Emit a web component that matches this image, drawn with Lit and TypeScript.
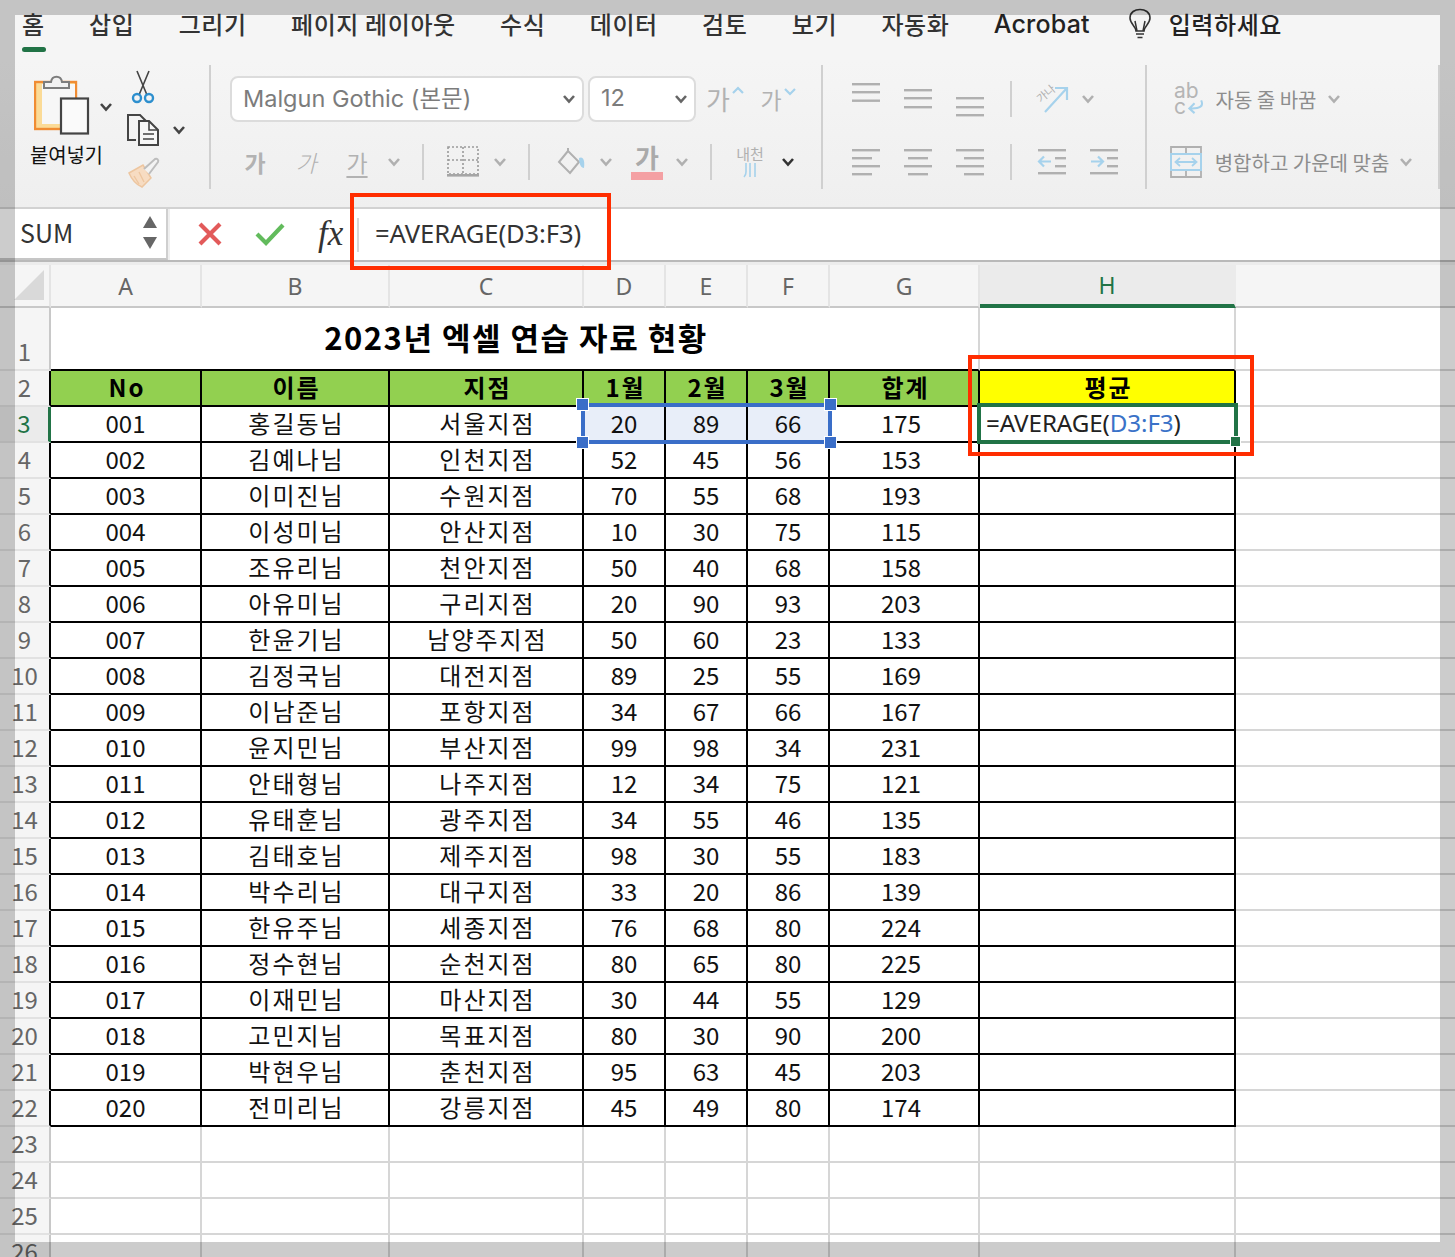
import { LitElement, html, css, svg, TemplateResult } from "lit";
import { customElement } from "lit/decorators.js";

const BLUE = "#a6d2ec";
const GREY = "#b0b0b0";

const chev = (c = "#b0b0b0", w = 2.6) => html`<svg width="14" height="10" viewBox="0 0 14 10"><path d="M2 2 L7 7.5 L12 2" fill="none" stroke=${c} stroke-width=${w} /></svg>`;

type Slot = { x: number; w: number; t: TemplateResult | string };

/** Places ribbon items in a flex row from their measured x positions. */
const place = (start: number, items: Slot[]) => {
  let end = start;
  return items.map((i) => {
    const m = i.x - end;
    end = i.x + i.w;
    return html`<span class="slot" style="margin-left:${m}px;width:${i.w}px">${i.t}</span>`;
  });
};

const alignL = (ys: [number, number, number][]) =>
  html`<svg width="30" height="36" viewBox="0 0 30 36">${ys.map(
    ([x, y, w]) => svg`<rect x=${x} y=${y} width=${w} height="2.4" fill=${GREY} />`
  )}</svg>`;

const clipboard = html`<svg width="56" height="62" viewBox="0 0 56 62">
  <rect x="1" y="8" width="41" height="47" fill="#fbdb97" stroke="#f08c33" stroke-width="2.4" />
  <rect x="8" y="10" width="33" height="40" fill="#f7f7f7" />
  <path d="M10 14 V8 H17 C18 1 27 1 28 8 H35 V14 Z" fill="#f2f2f2" stroke="#7d7d7d" stroke-width="2" />
  <rect x="27" y="24.5" width="27" height="35" fill="#fafafa" stroke="#444" stroke-width="2.2" />
</svg>`;

const scissors = html`<svg width="24" height="34" viewBox="0 0 24 34">
  <path d="M6 1 L16 25 M18 1 L8 25" stroke="#444" stroke-width="1.6" fill="none" />
  <circle cx="6" cy="28" r="4" fill="none" stroke="#2d8fce" stroke-width="2.4" />
  <circle cx="18" cy="28" r="4" fill="none" stroke="#2d8fce" stroke-width="2.4" />
</svg>`;

const copy = html`<svg width="34" height="34" viewBox="0 0 34 34">
  <path d="M10 27 H2 V2 H14 L20 8" fill="none" stroke="#444" stroke-width="2" />
  <path d="M13 8 H23 L32 17 V32 H13 Z" fill="#f7f7f7" stroke="#444" stroke-width="2" />
  <path d="M23 8 V17 H32 M17 21 H28 M17 26 H28" fill="none" stroke="#444" stroke-width="1.6" />
</svg>`;

const painter = html`<svg width="34" height="34" viewBox="0 0 34 34">
  <path d="M2 17 L16 9 L24 22 L15 31 C10 29 5 24 2 17 Z" fill="#f7dcc2" stroke="#edc6a0" stroke-width="1.5" />
  <path d="M17 13 L28 3 C30 2 32 4 31 6 L22 18" fill="#f3f3f3" stroke="#bdbdbd" stroke-width="2" />
  <path d="M7 20 L12 28 M12 16 L17 26" stroke="#edc6a0" stroke-width="1.4" />
</svg>`;

const borderIcon = html`<svg width="32" height="32" viewBox="0 0 32 32">
  <path d="M1 1 H31 V28 H1 Z M16 1 V28 M1 14 H31" fill="none" stroke="#9a9a9a" stroke-width="1.6" stroke-dasharray="2 2" />
  <rect x="0" y="28" width="32" height="2.6" fill="#a5a5a5" />
</svg>`;

const fill = html`<svg width="30" height="28" viewBox="0 0 30 28">
  <path d="M11 3 L2 14 L13 25 L22 14 Z" fill="none" stroke="#b0b0b0" stroke-width="2" />
  <path d="M11 3 V0" stroke="#b0b0b0" stroke-width="2" />
  <path d="M22 10 C26 8 28 12 27 20 C24 20 22 16 22 10 Z" fill=${BLUE} />
</svg>`;

const phonetic = html`<span class="naecheon"><span>내천</span><svg width="14" height="16" viewBox="0 0 14 16"><path d="M3 1 V10 C3 13 2 14 1 15 M7 1 V15 M12 1 V15" fill="none" stroke=${BLUE} stroke-width="1.6" /></svg></span>`;

const orient = html`<svg width="36" height="32" viewBox="0 0 36 32">
  <path d="M11 29 L33 5 M21 5 H33 V17" fill="none" stroke=${BLUE} stroke-width="2.2" />
  <text x="3" y="18" font-size="11" fill="#b0b0b0" transform="rotate(-40 8 14)" font-family="Noto Sans CJK KR">가나</text>
</svg>`;

const indent = (right: boolean) => html`<svg width="30" height="28" viewBox="0 0 30 28">
  <rect x="0" y="1" width="28" height="2.4" fill=${GREY} />
  <rect x="0" y="24" width="28" height="2.4" fill=${GREY} />
  <rect x="17" y="9" width="11" height="2.4" fill=${GREY} />
  <rect x="17" y="17" width="11" height="2.4" fill=${GREY} />
  <path d=${right ? "M1 13.5 H13 M8 8.5 L13 13.5 L8 18.5" : "M13 13.5 H1 M6 8.5 L1 13.5 L6 18.5"} fill="none" stroke=${BLUE} stroke-width="2.2" />
</svg>`;

const wrapIcon = html`<span class="abc"><span>ab</span><span class="abc2">c<svg width="17" height="16" viewBox="0 0 18 16"><path d="M15 1 C18 7 14 10 3 9.5 M8 4 L2.5 9.5 L8 14.5" fill="none" stroke=${BLUE} stroke-width="2.2" /></svg></span></span>`;

const mergeIcon = html`<svg width="32" height="32" viewBox="0 0 32 32">
  <path d="M1 1 H31 V31 H1 Z M16 1 V8 M16 24 V31" fill="none" stroke="#b0b0b0" stroke-width="1.8" />
  <rect x="1" y="8" width="30" height="16" fill="#f1f1f1" stroke=${BLUE} stroke-width="2" />
  <path d="M6 16 H26 M10 12 L5.5 16 L10 20 M22 12 L26.5 16 L22 20" fill="none" stroke=${BLUE} stroke-width="1.8" />
</svg>`;

const bulb = html`<svg width="26" height="32" viewBox="0 0 26 32">
  <path d="M9 23 C9 18 3 16 3 10 C3 4 8 1.5 13 1.5 C18 1.5 23 4 23 10 C23 16 17 18 17 23 Z" fill="none" stroke="#333" stroke-width="1.6" />
  <path d="M10 23 L8 13 M16 23 L18 13 M9 26 H17 M10.5 29.5 H15.5" fill="none" stroke="#333" stroke-width="1.5" />
</svg>`;

const TABS = ["홈", "삽입", "그리기", "페이지 레이아웃", "수식", "데이터", "검토", "보기", "자동화", "Acrobat"];

const HEAD = ["No", "이름", "지점", "1월", "2월", "3월", "합계"];
const ROWS: [string, string, string, number, number, number, number][] = [
  ["001", "홍길동님", "서울지점", 20, 89, 66, 175],
  ["002", "김예나님", "인천지점", 52, 45, 56, 153],
  ["003", "이미진님", "수원지점", 70, 55, 68, 193],
  ["004", "이성미님", "안산지점", 10, 30, 75, 115],
  ["005", "조유리님", "천안지점", 50, 40, 68, 158],
  ["006", "아유미님", "구리지점", 20, 90, 93, 203],
  ["007", "한윤기님", "남양주지점", 50, 60, 23, 133],
  ["008", "김정국님", "대전지점", 89, 25, 55, 169],
  ["009", "이남준님", "포항지점", 34, 67, 66, 167],
  ["010", "윤지민님", "부산지점", 99, 98, 34, 231],
  ["011", "안태형님", "나주지점", 12, 34, 75, 121],
  ["012", "유태훈님", "광주지점", 34, 55, 46, 135],
  ["013", "김태호님", "제주지점", 98, 30, 55, 183],
  ["014", "박수리님", "대구지점", 33, 20, 86, 139],
  ["015", "한유주님", "세종지점", 76, 68, 80, 224],
  ["016", "정수현님", "순천지점", 80, 65, 80, 225],
  ["017", "이재민님", "마산지점", 30, 44, 55, 129],
  ["018", "고민지님", "목표지점", 80, 30, 90, 200],
  ["019", "박현우님", "춘천지점", 95, 63, 45, 203],
  ["020", "전미리님", "강릉지점", 45, 49, 80, 174],
];

@customElement("app-root")
export class AppRoot extends LitElement {
  static styles = css`
    :host {
      display: block;
      position: relative;
      width: 1455px;
      height: 1257px;
      overflow: hidden;
      background: #fff;
      font-family: "Noto Sans CJK KR", "Noto Sans", sans-serif;
      color: #111;
    }
    .ribbon {
      height: 207px;
      box-sizing: border-box;
      background: linear-gradient(#f5f5f5, #f5f5f5 60px, #efefef);
    }
    .tabs {
      height: 65px;
      box-sizing: border-box;
      padding: 4px 0 0 22px;
      display: flex;
      gap: 44.3px;
      font-size: 24px;
      line-height: 40px;
      font-weight: 500;
      letter-spacing: 0.6px;
      color: #333;
    }
    .tab { position: relative; white-space: nowrap; }
    .tab.on::after {
      content: "";
      position: absolute;
      left: 0;
      right: -1px;
      top: 43px;
      height: 5px;
      border-radius: 3px;
      background: #217346;
    }
    .tab.latin { font-family: Inter, sans-serif; font-size: 25px; letter-spacing: 0.2px; color: #222; }
    .tell { display: flex; gap: 16px; margin-left: -7.5px; color: #222; }
    .tell svg { margin-top: 4px; }
    .groups { display: flex; height: 124px; }
    .group { box-sizing: border-box; border-right: 2px solid #d0d0d0; height: 124px; }
    .g1 { width: 211px; display: flex; }
    .g2 { width: 612px; }
    .g3 { width: 324px; }
    .g4 { width: 293px; }
    .g1 .paste { width: 88px; margin-left: 30px; display: flex; flex-direction: column; padding-top: 9px; }
    .paste-top { display: flex; align-items: center; gap: 9px; margin-left: 4px; height: 62px; }
    .paste-top svg:last-child { margin-top: 4px; }
    .paste-label { font-size: 20px; line-height: 24px; color: #111; margin-top: 7px; white-space: nowrap; letter-spacing: -0.2px; }
    .tools { margin-left: 8px; display: flex; flex-direction: column; align-items: flex-start; padding-top: 5px; gap: 9px; }
    .tools > * { display: flex; align-items: center; gap: 12px; }
    .tools .cut { margin-left: 5px; }
    .tools .brush { margin-left: 1px; }
    .row { display: flex; align-items: center; }
    .row.a { height: 46px; margin-top: 11px; }
    .row.b { height: 36px; margin-top: 22px; }
    .slot { display: flex; align-items: center; justify-content: center; flex: none; height: 100%; white-space: nowrap; }
    .slot svg { overflow: visible; }
    .sep { width: 2px; height: 36px; background: #d0d0d0; }
    .select {
      box-sizing: border-box;
      width: 100%;
      height: 46px;
      background: #fff;
      border: 2px solid #dcdcdc;
      border-radius: 8px;
      display: flex;
      align-items: center;
      justify-content: space-between;
      padding: 0 6px 0 11px;
      font-family: Inter, "Noto Sans CJK KR", sans-serif;
      font-size: 23.5px;
      color: #7c7c7c;
    }
    .select span { margin-top: -4px; }
    .ga { font-size: 23px; color: #b2b2b2; line-height: 1; }
    .ga.big { font-size: 26px; }
    .ga.bold { font-weight: 700; }
    .ga.ital { font-style: italic; font-weight: 300; }
    .ga.under { text-decoration: underline; text-underline-offset: 4px; }
    .color { display: flex; flex-direction: column; align-items: center; width: 32px; }
    .color .ga { font-size: 26px; font-weight: 700; line-height: 26px; color: #aaa; }
    .color i { display: block; width: 32px; height: 8px; background: #f4a0a3; margin-top: 2px; }
    .grow { display: flex; align-items: flex-start; gap: 2px; }
    .naecheon { display: flex; flex-direction: column; align-items: center; font-size: 15px; line-height: 16px; color: #b0b0b0; }
    .abc { display: flex; flex-direction: column; font-family: Inter, sans-serif; font-size: 21px; line-height: 16px; color: #b5b5b5; }
    .abc2 { display: flex; align-items: flex-end; gap: 1px; }
    .lbl { color: #8d8d8d; font-size: 20px; }
    .bar {
      height: 55px;
      box-sizing: border-box;
      display: flex;
      background: #fff;
      border-top: 2px solid #d2d2d2;
      border-bottom: 2px solid #b9b9b9;
    }
    .name {
      width: 168px;
      box-sizing: border-box;
      display: flex;
      align-items: center;
      justify-content: space-between;
      padding: 0 9px 3px 20px;
      font-size: 25px;
      color: #333;
      border-right: 2px solid #cfcfcf;
      border-bottom: 2px solid #c6c6c6;
    }
    .updown { display: flex; flex-direction: column; gap: 9px; }
    .gap { width: 2px; background: #efefef; }
    .fbtns { display: flex; align-items: center; width: 187px; padding-left: 27px; box-sizing: border-box; gap: 32px; padding-bottom: 2px; }
    .fx { font-family: "Liberation Serif", serif; font-style: italic; font-size: 35px; color: #333; line-height: 1; margin-left: 1px; }
    .fsep { width: 2px; height: 34px; background: #d8d8d8; align-self: center; }
    .formula { font-size: 25.6px; color: #333; margin-left: 16px; align-self: center; padding-bottom: 3px; letter-spacing: -0.1px; white-space: nowrap; font-family: "Noto Sans", sans-serif; }
    .strip { height: 3px; background: #ececec; }
    .sheet {
      display: grid;
      grid-template-columns: 51px 151px 188px 194px 82px 82px 82px 150px 256px 1fr;
      grid-template-rows: 43px 63px repeat(25, 36px);
      height: 992px;
      overflow: hidden;
    }
    .c {
      box-sizing: border-box;
      border-right: 2px solid #d6d6d6;
      border-bottom: 2px solid #d6d6d6;
      display: flex;
      align-items: center;
      justify-content: center;
      font-size: 24px;
      line-height: 1;
      white-space: nowrap;
      color: #111;
      min-width: 0;
      padding-bottom: 3px;
    }
    .c.last { border-right: none; }
    .hd { background: #f5f5f5; color: #666; border-right-color: #e4e4e4; border-bottom-color: #c8c8c8; font-family: "Noto Sans", sans-serif; font-size: 23px; padding: 2px 0 0; }
    .hd.sel { background: #ebebeb; color: #217346; border-bottom: 4px solid #217346; border-right-color: #ebebeb; }
    .corner { justify-content: flex-end; padding: 0 3px 0 0; }
    .rh { background: #f5f5f5; color: #666; border-right-color: #c8c8c8; border-bottom-color: #e2e2e2; font-size: 24px; padding: 0 0 2px; }
    .rh.bl { border-right-color: #000; }
    .rh.one { align-items: flex-end; padding-bottom: 6px; }
    .rh.sel { background: #ebebeb; color: #217346; border-right: 3px solid #217346; }
    .t { border-right-color: #000; border-bottom-color: #000; }
    .topblk { border-bottom-color: #000; }
    .green { background: #92d050; font-weight: 700; color: #000; }
    .yellow { background: #ffff00; font-weight: 700; color: #000; }
    .ko { letter-spacing: 2px; padding-left: 3px; }
    .sum { padding-right: 6px; }
    .picked { background: #e8eef9; }
    .title { grid-column: 2 / span 7; font-size: 31px; font-weight: 700; color: #000; letter-spacing: 1.5px; border-right-color: #d6d6d6; border-bottom-color: #000; padding: 0 0 5px 3px; }
    .fcell { justify-content: flex-start; padding: 0 0 1px 6px; font-family: "Noto Sans", sans-serif; font-size: 24.2px; letter-spacing: -0.1px; color: #222; }
    .fcell b { font-weight: 400; color: #3a72c8; }
    /* markers lying over the grid */
    .mark { position: absolute; box-sizing: border-box; pointer-events: none; }
    .blue { left: 581px; top: 403px; width: 251px; height: 41px; border: 4px solid #3a6ec8; }
    .h { position: absolute; width: 13px; height: 13px; background: #3a6ec8; border: 1.5px solid #fff; box-sizing: border-box; }
    .h.tl { left: -9px; top: -9px; } .h.tr { right: -9px; top: -9px; }
    .h.bl { left: -9px; bottom: -9px; } .h.br { right: -9px; bottom: -9px; }
    .active { left: 977px; top: 403px; width: 261px; height: 41px; border: 4px solid #217346; }
    .fillh { position: absolute; right: -7px; bottom: -7px; width: 9px; height: 9px; background: #217346; border: 1px solid #fff; box-sizing: content-box; }
    .red { border: 4.5px solid #ff2d00; }
    .red.one { left: 350px; top: 193px; width: 261px; height: 77px; }
    .red.two { left: 968px; top: 355px; width: 286px; height: 101px; }
    .frame { left: 0; top: 0; width: 1455px; height: 1257px; border: 15px solid rgba(0, 0, 0, 0.2); }
  `;

  render() {
    const cols = ["A", "B", "C", "D", "E", "F", "G", "H"];
    return html`
      <div class="ribbon">
        <div class="tabs">
          ${TABS.map((t, i) => html`<span class="tab ${i === 0 ? "on" : ""} ${t === "Acrobat" ? "latin" : ""}">${t}</span>`)}
          <span class="tell tab">${bulb}<span>입력하세요</span></span>
        </div>
        <div class="groups">
          <div class="group g1">
            <div class="paste">
              <div class="paste-top">${clipboard}${chev("#444")}</div>
              <div class="paste-label">붙여넣기</div>
            </div>
            <div class="tools">
              <div class="cut">${scissors}</div>
              <div>${copy}${chev("#444")}</div>
              <div class="brush">${painter}</div>
            </div>
          </div>
          <div class="group g2">
            <div class="row a">
              ${place(211, [
                { x: 230, w: 354, t: html`<div class="select"><span>Malgun Gothic (본문)</span>${chev("#666")}</div>` },
                { x: 588, w: 108, t: html`<div class="select"><span>12</span>${chev("#666")}</div>` },
                { x: 707, w: 36, t: html`<span class="grow"><span class="ga big">가</span><svg width="12" height="8" viewBox="0 0 12 8"><path d="M1 7 L6 2 L11 7" fill="none" stroke=${BLUE} stroke-width="2.2" /></svg></span>` },
                { x: 763, w: 30, t: html`<span class="grow"><span class="ga">가</span><svg width="12" height="8" viewBox="0 0 12 8"><path d="M1 1 L6 6 L11 1" fill="none" stroke=${BLUE} stroke-width="2.2" /></svg></span>` },
              ])}
            </div>
            <div class="row b">
              ${place(211, [
                { x: 244, w: 22, t: html`<span class="ga bold">가</span>` },
                { x: 295, w: 22, t: html`<span class="ga ital">가</span>` },
                { x: 346, w: 22, t: html`<span class="ga under">가</span>` },
                { x: 387, w: 14, t: chev() },
                { x: 422, w: 2, t: html`<i class="sep"></i>` },
                { x: 447, w: 32, t: borderIcon },
                { x: 493, w: 14, t: chev() },
                { x: 528, w: 2, t: html`<i class="sep"></i>` },
                { x: 557, w: 30, t: fill },
                { x: 599, w: 14, t: chev() },
                { x: 631, w: 32, t: html`<span class="color"><span class="ga">가</span><i></i></span>` },
                { x: 675, w: 14, t: chev() },
                { x: 710, w: 2, t: html`<i class="sep"></i>` },
                { x: 735, w: 30, t: phonetic },
                { x: 781, w: 14, t: chev("#333") },
              ])}
            </div>
          </div>
          <div class="group g3">
            <div class="row a">
              ${place(823, [
                { x: 852, w: 30, t: alignL([[0, 2, 28], [0, 10, 28], [0, 18.5, 28]]) },
                { x: 904, w: 30, t: alignL([[0, 8, 28], [0, 16, 28], [0, 25, 28]]) },
                { x: 956, w: 30, t: alignL([[0, 16, 28], [0, 25, 28], [0, 33, 28]]) },
                { x: 1010, w: 2, t: html`<i class="sep"></i>` },
                { x: 1034, w: 36, t: orient },
                { x: 1081, w: 14, t: chev() },
              ])}
            </div>
            <div class="row b">
              ${place(823, [
                { x: 852, w: 30, t: alignL([[0, 5, 28], [0, 13, 20], [0, 21, 28], [0, 29, 20]]) },
                { x: 904, w: 30, t: alignL([[0, 5, 28], [4, 13, 20], [0, 21, 28], [4, 29, 20]]) },
                { x: 956, w: 30, t: alignL([[0, 5, 28], [8, 13, 20], [0, 21, 28], [8, 29, 20]]) },
                { x: 1010, w: 2, t: html`<i class="sep"></i>` },
                { x: 1038, w: 30, t: indent(false) },
                { x: 1090, w: 30, t: indent(true) },
              ])}
            </div>
          </div>
          <div class="group g4">
            <div class="row a">
              ${place(1147, [
                { x: 1174, w: 30, t: wrapIcon },
                { x: 1214, w: 104, t: html`<span class="lbl">자동 줄 바꿈</span>` },
                { x: 1327, w: 14, t: chev() },
              ])}
            </div>
            <div class="row b">
              ${place(1147, [
                { x: 1170, w: 32, t: mergeIcon },
                { x: 1214, w: 176, t: html`<span class="lbl">병합하고 가운데 맞춤</span>` },
                { x: 1399, w: 14, t: chev() },
              ])}
            </div>
          </div>
        </div>
      </div>

      <div class="bar">
        <div class="name">
          <span>SUM</span>
          <span class="updown">
            <svg width="14" height="12" viewBox="0 0 14 12"><path d="M7 0 L14 12 H0 Z" fill="#666" /></svg>
            <svg width="14" height="12" viewBox="0 0 14 12"><path d="M0 0 H14 L7 12 Z" fill="#666" /></svg>
          </span>
        </div>
        <div class="gap"></div>
        <div class="fbtns">
          <svg width="26" height="26" viewBox="0 0 26 26"><path d="M3 3 L23 23 M23 3 L3 23" stroke="#e25a5a" stroke-width="4.2" /></svg>
          <svg width="30" height="24" viewBox="0 0 30 24"><path d="M2 12 L11 21 L28 3" fill="none" stroke="#62bb5c" stroke-width="4.2" /></svg>
          <span class="fx">fx</span>
        </div>
        <i class="fsep"></i>
        <span class="formula">=AVERAGE(D3:F3)</span>
      </div>
      <div class="strip"></div>

      <div class="sheet">
        <div class="c hd corner">
          <svg width="32" height="32" viewBox="0 0 32 32"><path d="M30 0 V30 H0 Z" fill="#d9d9d9" /></svg>
        </div>
        ${cols.map((c) => html`<div class="c hd ${c === "H" ? "sel" : ""}">${c}</div>`)}
        <div class="c hd last"></div>

        <div class="c rh one">1</div>
        <div class="c title">2023년 엑셀 연습 자료 현황</div>
        <div class="c topblk"></div>
        <div class="c last"></div>

        <div class="c rh bl">2</div>
        ${HEAD.map((h) => html`<div class="c t green ko">${h}</div>`)}
        <div class="c t yellow ko">평균</div>
        <div class="c last"></div>

        ${ROWS.map(
          (r, i) => html`
            <div class="c rh bl ${i === 0 ? "sel" : ""}">${i + 3}</div>
            <div class="c t">${r[0]}</div>
            <div class="c t ko">${r[1]}</div>
            <div class="c t ko">${r[2]}</div>
            ${[r[3], r[4], r[5]].map((v) => html`<div class="c t ${i === 0 ? "picked" : ""}">${v}</div>`)}
            <div class="c t sum">${r[6]}</div>
            ${i === 0
              ? html`<div class="c t fcell">=AVERAGE(<b>D3:F3</b>)</div>`
              : html`<div class="c t"></div>`}
            <div class="c last"></div>
          `
        )}
        ${[23, 24, 25, 26].map(
          (n) => html`
            <div class="c rh">${n}</div>
            ${cols.map(() => html`<div class="c"></div>`)}
            <div class="c last"></div>
          `
        )}
      </div>

      <div class="mark blue">
        <i class="h tl"></i><i class="h tr"></i><i class="h bl"></i><i class="h br"></i>
      </div>
      <div class="mark active"><i class="fillh"></i></div>
      <div class="mark red one"></div>
      <div class="mark red two"></div>
      <div class="mark frame"></div>
    `;
  }
}
